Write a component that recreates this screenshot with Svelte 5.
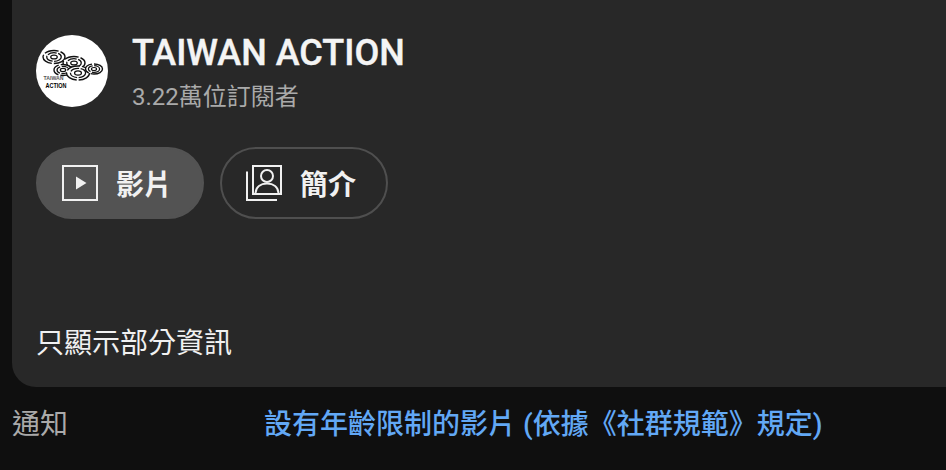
<script>
  const swirls = [
    { cx: 18, cy: 22, rx: 11, ry: 6.5 },
    { cx: 38, cy: 28, rx: 11, ry: 6.5 },
    { cx: 27, cy: 35, rx: 9, ry: 5.5 },
    { cx: 42, cy: 38, rx: 11.5, ry: 7 },
    { cx: 58, cy: 34, rx: 8.5, ry: 5 }
  ];
</script>

<div class="page">
  <section class="panel">
    <header class="channel">
      <div class="avatar">
        <svg viewBox="0 0 72 72" width="72" height="72" aria-hidden="true">
          <circle cx="36" cy="36" r="36" fill="#fff" />
          {#each swirls as s}
            <g fill="none" stroke="#111">
              <ellipse cx={s.cx} cy={s.cy} rx={s.rx} ry={s.ry} stroke-width="1.400" fill="#fff" stroke-dasharray="14 2" />
              <ellipse cx={s.cx} cy={s.cy} rx={s.rx * 0.66} ry={s.ry * 0.66} stroke-width="1.300" stroke-dasharray="9 1.500" />
              <ellipse cx={s.cx} cy={s.cy} rx={s.rx * 0.3} ry={s.ry * 0.3} stroke-width="1.200" />
            </g>
          {/each}
          <text x="7.500" y="45" class="logo-thin" textLength="20" lengthAdjust="spacingAndGlyphs">TAIWAN</text>
          <text x="9.500" y="53" class="logo-bold" textLength="21" lengthAdjust="spacingAndGlyphs">ACTION</text>
        </svg>
      </div>
      <div class="meta">
        <h1>TAIWAN ACTION</h1>
        <p>3.22萬位訂閱者</p>
      </div>
    </header>

    <nav class="tabs">
      <button class="tab active">
        <svg viewBox="0 0 36 36" width="36" height="36" aria-hidden="true">
          <rect x="1" y="1" width="34" height="34" fill="none" stroke="#f1f1f1" stroke-width="2" />
          <path d="M14 11.500v13l10.500-6.500z" fill="#f1f1f1" />
        </svg>
        <span>影片</span>
      </button>
      <button class="tab">
        <svg viewBox="0 0 36 36" width="36" height="36" aria-hidden="true">
          <path d="M1 6.500V35h30" fill="none" stroke="#f1f1f1" stroke-width="2" />
          <rect x="7" y="1" width="28" height="28" fill="none" stroke="#f1f1f1" stroke-width="2" />
          <circle cx="21" cy="11" r="6" fill="none" stroke="#f1f1f1" stroke-width="2" />
          <path d="M9.500 28c.5-6 5-9.500 11.500-9.500S32 22 32.500 28" fill="none" stroke="#f1f1f1" stroke-width="2" />
        </svg>
        <span>簡介</span>
      </button>
    </nav>

    <p class="partial">只顯示部分資訊</p>
  </section>

  <footer class="foot">
    <span class="notice">通知</span>
    <a class="link" href="#top">設有年齡限制的影片 (依據《社群規範》規定)</a>
  </footer>
</div>

<style>
  :global(body) {
    margin: 0;
    background: #0f0f0f;
  }

  .page {
    width: 946px;
    height: 470px;
    overflow: hidden;
    background: #0f0f0f;
    font-family: Roboto, "Noto Sans CJK TC", sans-serif;
    box-sizing: border-box;
  }

  .panel {
    box-sizing: border-box;
    height: 387px;
    margin-left: 12px;
    padding: 35px 0 0 24px;
    background: #282828;
    border-radius: 0 0 0 24px;
    display: flex;
    flex-direction: column;
  }

  .channel {
    display: flex;
    gap: 24px;
  }

  .avatar {
    width: 72px;
    height: 72px;
    flex: none;
  }

  .avatar svg {
    display: block;
  }

  .logo-thin {
    font: 700 5px "Liberation Sans", sans-serif;
    fill: #555;
  }

  .logo-bold {
    font: 700 7px "Liberation Sans", sans-serif;
    fill: #000;
  }

  .meta {
    min-width: 0;
  }

  h1 {
    margin: 0;
    height: 36px;
    font-size: 36px;
    line-height: 36px;
    font-weight: 500;
    color: #f4f4f4;
    -webkit-text-stroke: 0.4px #f4f4f4;
  }

  .meta p {
    margin: 8px 0 0;
    font-size: 24px;
    line-height: 36px;
    color: #aaa;
    height: 36px;
  }

  .tabs {
    display: flex;
    gap: 16px;
    margin-top: 32px;
  }

  .tab {
    box-sizing: border-box;
    height: 72px;
    width: 168px;
    border-radius: 36px;
    border: 2px solid #4f4f4f;
    background: transparent;
    color: #f1f1f1;
    display: flex;
    align-items: center;
    gap: 18px;
    padding: 0 0 0 24px;
    font: 700 28px Roboto, "Noto Sans CJK TC", sans-serif;
  }

  .tab.active {
    background: #535353;
    border-color: #535353;
  }

  .partial {
    margin: 105px 0 0 0;
    font-size: 28px;
    line-height: 40px;
    color: #f1f1f1;
  }

  .foot {
    display: flex;
    align-items: center;
    height: 72px;
    padding: 0 0 2px 12px;
    box-sizing: border-box;
    font-size: 28px;
  }

  .notice {
    color: #aaa;
    width: 252px;
    flex: none;
  }

  .link {
    color: #62a8f5;
    font-weight: 500;
    text-decoration: none;
  }
</style>
